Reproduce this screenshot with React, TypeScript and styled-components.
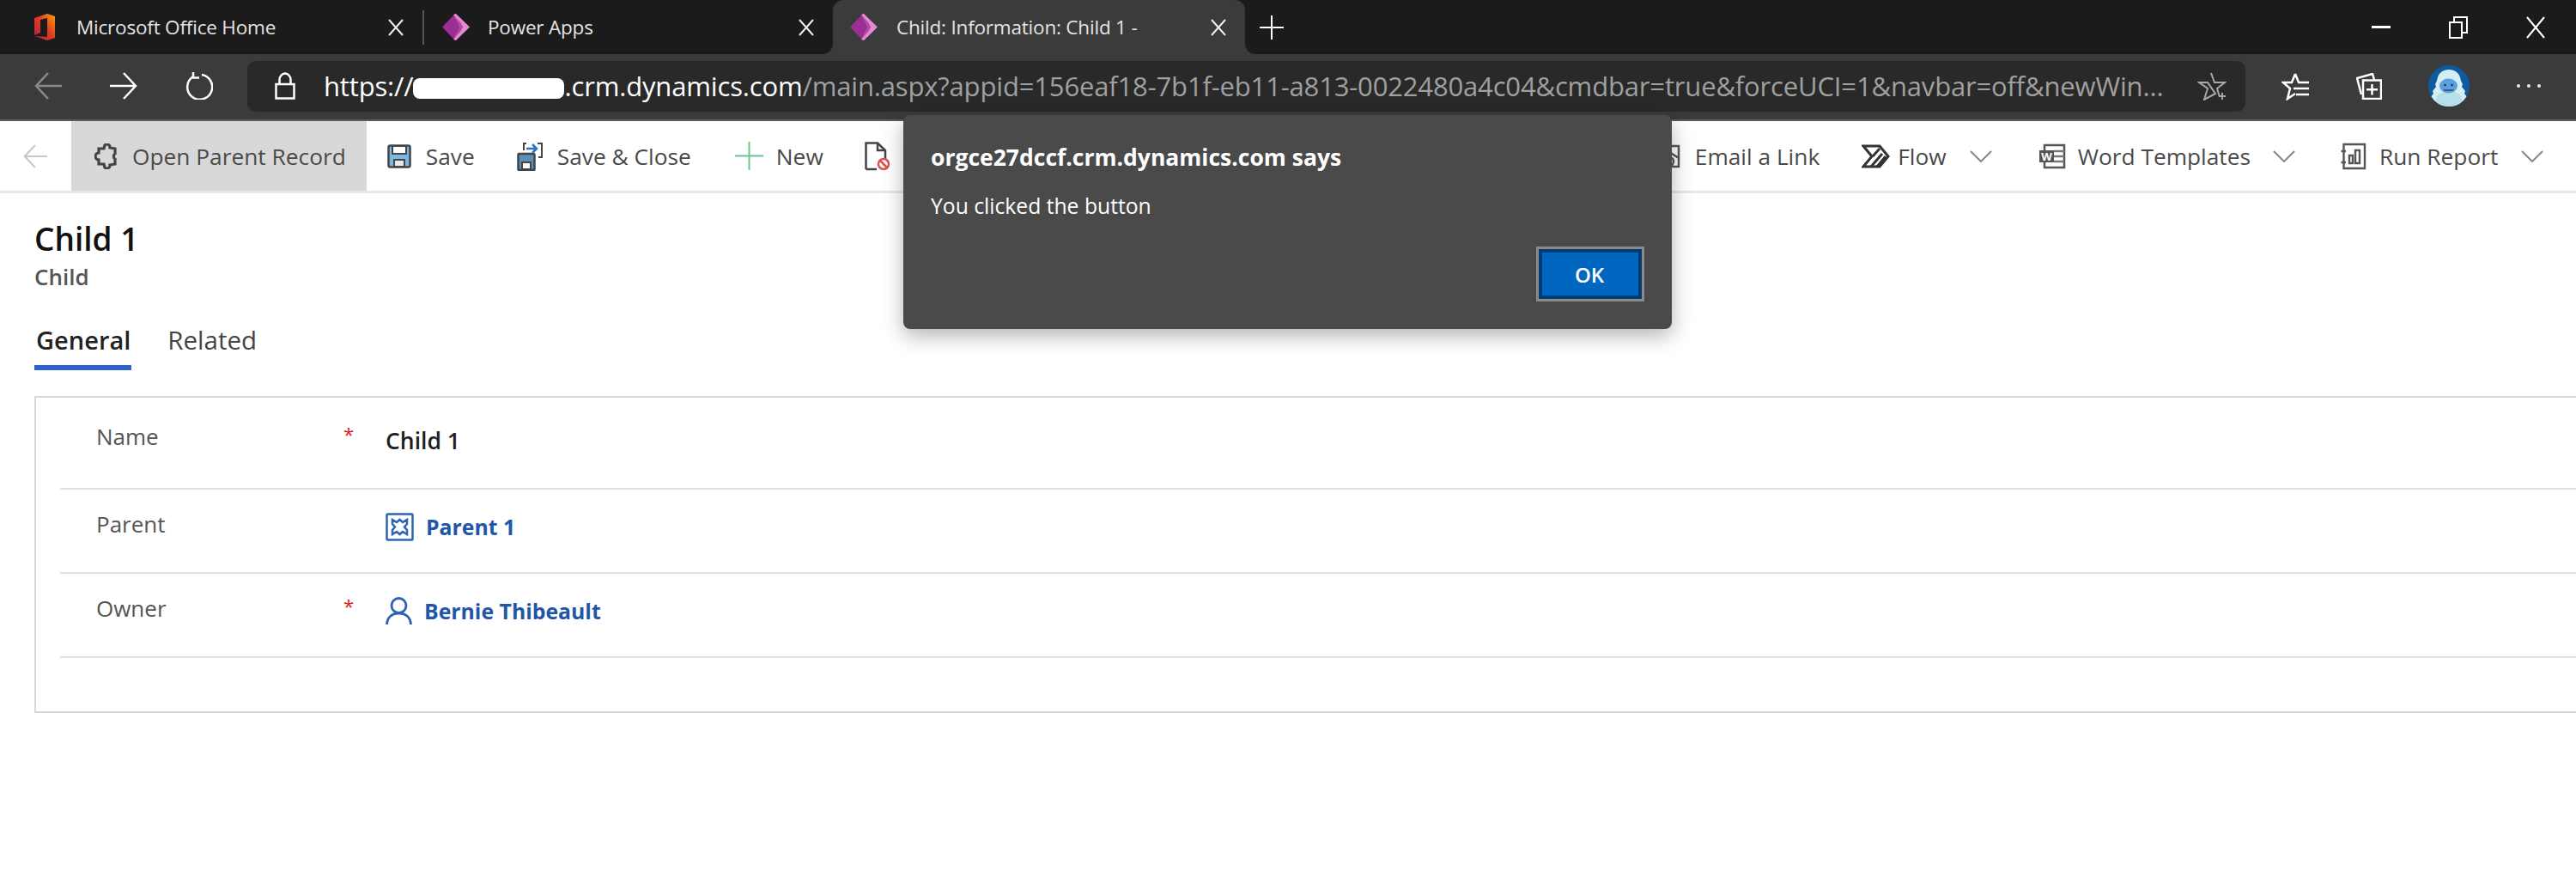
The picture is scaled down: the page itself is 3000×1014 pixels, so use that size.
import React from "react";
import styled, { createGlobalStyle } from "styled-components";

const GlobalStyle = createGlobalStyle`
  html, body {
    margin: 0;
    padding: 0;
    background: #fff;
    font-family: "Open Sans", "Noto Sans", sans-serif;
  }
  * { box-sizing: border-box; }
`;

const Page = styled.div`
  position: relative;
  width: 3000px;
  height: 1014px;
  overflow: hidden;
  background: #fff;
`;

/* browser chrome */
const TabStrip = styled.div`
  display: flex;
  height: 63px;
  background: linear-gradient(#1b1b1b 50%, #3b3b3b 50%);
`;

const TabGroup = styled.div`
  display: flex;
  width: 970px;
  background: #1b1b1b;
  border-bottom-right-radius: 12px;
`;

const Tab = styled.div<{ $active?: boolean; $width: number; $left: number }>`
  display: flex;
  align-items: center;
  width: ${(p) => p.$width}px;
  padding-left: ${(p) => p.$left}px;
  padding-right: 22px;
  background: ${(p) => (p.$active ? "#3b3b3b" : "transparent")};
  border-radius: ${(p) => (p.$active ? "12px 12px 0 0" : "0")};
  color: #e4e4e4;
  font-size: 22.5px;
  letter-spacing: -0.2px;
`;

const TabTitle = styled.span<{ $gap: number }>`
  flex: 1;
  margin-left: ${(p) => p.$gap}px;
  white-space: nowrap;
`;

const TabDivider = styled.div`
  width: 2px;
  height: 40px;
  margin-top: 12px;
  background: #555;
`;

const StripRest = styled.div`
  flex: 1;
  display: flex;
  align-items: center;
  padding-left: 17px;
  background: #1b1b1b;
  border-bottom-left-radius: 12px;
`;

const WindowControls = styled.div`
  display: flex;
  align-items: center;
  gap: 68px;
  margin-left: auto;
  margin-right: 36px;
`;

const Toolbar = styled.div`
  display: flex;
  align-items: center;
  height: 78px;
  padding: 0 40px 2px 40px;
  background: #3b3b3b;
  border-bottom: 2px solid #5c5c5c;
`;

const NavIcons = styled.div`
  display: flex;
  align-items: center;
  gap: 56px;
  margin-right: 40px;
`;

const AddressBar = styled.div`
  display: flex;
  align-items: center;
  width: 2327px;
  height: 59px;
  padding: 0 22px 0 32px;
  border-radius: 10px;
  background: #292929;
`;

const Url = styled.div`
  flex: 1;
  margin-left: 33px;
  font-size: 31px;
  letter-spacing: -0.16px;
  color: #a0a0a0;
  white-space: nowrap;
  overflow: hidden;
`;

const UrlHost = styled.span`
  color: #fff;
`;

const Redaction = styled.span`
  display: inline-block;
  width: 176px;
  height: 24px;
  margin: 0 0 -3px 0;
  background: #fff;
  border-radius: 8px;
`;

const ToolbarIcons = styled.div`
  display: flex;
  align-items: center;
  margin-left: 42px;
  gap: 54px;
`;

/* command bar */
const CommandBar = styled.div`
  display: flex;
  align-items: stretch;
  height: 84px;
  padding-left: 27px;
  border-bottom: 3px solid #e8e8e8;
  background: #fff;
  color: #4a4a4a;
  font-size: 26.3px;
`;

const BackSlot = styled.div`
  display: flex;
  align-items: center;
  width: 56px;
`;

const Command = styled.div<{ $active?: boolean; $gap?: number; $margin?: number }>`
  display: flex;
  align-items: center;
  gap: ${(p) => p.$gap ?? 17}px;
  margin-left: ${(p) => p.$margin ?? 0}px;
  padding: ${(p) => (p.$active ? "0 24px 0 27px" : "0")};
  background: ${(p) => (p.$active ? "#d8d8d8" : "transparent")};
  white-space: nowrap;
`;

const Chevron = styled.span<{ $left?: number }>`
  display: flex;
  margin-left: ${(p) => p.$left ?? 12}px;
`;

/* form */
const Content = styled.div`
  padding-left: 40px;
`;

const RecordTitle = styled.h1`
  margin: 31px 0 5px;
  font-size: 37px;
  line-height: 44px;
  font-weight: 600;
  color: #111;
`;

const RecordType = styled.div`
  font-size: 26px;
  line-height: 34px;
  font-weight: 600;
  color: #555;
`;

const FormTabs = styled.div`
  display: flex;
  gap: 40px;
  margin-top: 39px;
  line-height: 36px;
`;

const FormTab = styled.div<{ $active?: boolean }>`
  padding: 0 1px 11px 2px;
  border-bottom: 6px solid ${(p) => (p.$active ? "#2b64cf" : "transparent")};
  color: ${(p) => (p.$active ? "#222" : "#444")};
  font-weight: ${(p) => (p.$active ? 600 : 400)};
  font-size: ${(p) => (p.$active ? 29 : 29.5)}px;
`;

const Card = styled.section`
  height: 369px;
  margin: 30px -10px 0 0;
  padding-left: 28px;
  border: 2px solid #d8d8d8;
`;

const Row = styled.div<{ $first?: boolean }>`
  display: grid;
  grid-template-columns: 288px 49px 1fr;
  height: ${(p) => (p.$first ? 107 : 98)}px;
  padding: ${(p) => (p.$first ? 27 : 22)}px 0 0 42px;
  border-bottom: 2px solid #e2e2e2;
`;

const Label = styled.div`
  font-size: 26px;
  line-height: 36px;
  color: #555;
`;

const Required = styled.div`
  font-size: 22px;
  line-height: 26px;
  margin-top: 2px;
  color: #e0201c;
`;

const Value = styled.div<{ $first?: boolean }>`
  display: flex;
  align-items: center;
  gap: 14px;
  height: 36px;
  margin-top: ${(p) => (p.$first ? 5 : 3)}px;
  font-size: 26.5px;
  font-weight: 600;
  color: #1f1f1f;
`;

const RecordLink = styled.span`
  color: #1f56a8;
  font-size: 24.8px;
  font-weight: 700;
`;

/* alert */
const Alert = styled.div`
  position: absolute;
  left: 1052px;
  top: 134px;
  display: flex;
  flex-direction: column;
  width: 895px;
  height: 249px;
  padding: 31px 32px 32px;
  border-radius: 8px;
  background: #4a4a4a;
  box-shadow: 0 8px 24px rgba(0, 0, 0, 0.3);
  color: #fff;
`;

const AlertTitle = styled.div`
  font-size: 26.5px;
  line-height: 36px;
  font-weight: 700;
`;

const AlertMessage = styled.div`
  margin-top: 21px;
  font-size: 24.7px;
  line-height: 36px;
`;

const OkButton = styled.button`
  align-self: flex-end;
  width: 126px;
  height: 64px;
  margin-top: auto;
  padding: 0 2px 0 0;
  border: 3px solid #8a8a8a;
  outline: 4px solid #003c72;
  outline-offset: -7px;
  background: #0067c0;
  color: #fff;
  font-family: inherit;
  font-size: 24px;
  font-weight: 600;
`;

const Stroke = ({ w, h, children, color = "#fff", sw = 2.5 }: { w: number; h: number; children: React.ReactNode; color?: string; sw?: number }) => (
  <svg width={w} height={h} viewBox={`0 0 ${w} ${h}`} fill="none" stroke={color} strokeWidth={sw}>
    {children}
  </svg>
);

const OfficeLogo = () => (
  <svg width="24" height="31" viewBox="0 0 24 31">
    <defs>
      <linearGradient id="off" x1="0" y1="1" x2="1" y2="0">
        <stop offset="0" stopColor="#b5174f" />
        <stop offset="0.55" stopColor="#e2401d" />
        <stop offset="1" stopColor="#f7a216" />
      </linearGradient>
    </defs>
    <path d="M0 5 L15 0 L24 3 V28 L15 31 L0 26 L15 27 V5 L7 7 V22 L0 25 Z" fill="url(#off)" />
  </svg>
);

const PowerAppsLogo = () => (
  <svg width="32" height="31" viewBox="0 0 32 31">
    <path d="M0 15.5 L13 2 L20 15.5 L13 29 Z" fill="#9b2f94" />
    <path d="M13 2 L16 0 L24 15.5 L16 31 L13 29 L20 15.5 Z" fill="#b64aa8" />
    <path d="M13 1 L16 0 L32 15.5 L16 31 L13 30 L21 21 L24 15.5 L21 10 Z" fill="#e58ad2" />
  </svg>
);

const CloseIcon = () => (
  <Stroke w={18} h={20} color="#eee" sw={2}>
    <path d="M1 1 L17 19 M17 1 L1 19" />
  </Stroke>
);

const ArrowLeft = ({ color = "#8a8a8a", size = 32 }: { color?: string; size?: number }) => (
  <svg width={size} height={size} viewBox="0 0 32 32" fill="none" stroke={color} strokeWidth="2.5">
    <path d="M32 16 H2 M16 1 L2 16 L16 31" />
  </svg>
);

const ArrowRight = () => (
  <Stroke w={32} h={32}>
    <path d="M0 16 H30 M16 1 L30 16 L16 31" />
  </Stroke>
);

const Refresh = () => (
  <Stroke w={32} h={32}>
    <path d="M9 5 A14.5 14.5 0 1 0 19 3" />
    <path d="M9 0 V6.5 H16" />
  </Stroke>
);

const Lock = () => (
  <Stroke w={24} h={32}>
    <path d="M1.5 14 H22.5 V30.5 H1.5 Z M5.5 14 V9 A6.5 7.5 0 0 1 18.5 9 V14" />
  </Stroke>
);

const StarAdd = () => (
  <Stroke w={34} h={34} color="#a8a8a8" sw={2}>
    <path d="M16 2 L20 13 H32 L23 20 L26 30 M21 26 L8 33 L12 20 L2 13 H12 Z" />
    <path d="M29 25 V33 M25 29 H33" />
  </Stroke>
);

const Favorites = () => (
  <Stroke w={33} h={33}>
    <path d="M16 2 L20 12 H24 M14 19 H32 M17 26 H32 M21 12 H32 M16 2 L12 12 H2 L10 19 L7 31 L16 25" />
  </Stroke>
);

const Collections = () => (
  <Stroke w={30} h={31}>
    <path d="M6 25 L1 6 L19 1 L21 8" />
    <path d="M8 8.5 H29 V30 H8 Z M18.5 13 V25.5 M12 19.2 H25" />
  </Stroke>
);

const Avatar = () => (
  <svg width="48" height="48" viewBox="0 0 48 48" style={{ display: "block" }}>
    <defs>
      <clipPath id="av"><circle cx="24" cy="24" r="24" /></clipPath>
    </defs>
    <g clipPath="url(#av)">
      <rect width="48" height="48" fill="#0e5a9e" />
      <path d="M24 5 C16 5 11 10 10 18 L8 22 L9 25 L5 30 L6 33 L2 38 V48 H46 V38 L42 33 L43 30 L39 25 L40 22 L38 18 C37 10 32 5 24 5 Z" fill="#d4eef4" />
      <ellipse cx="24" cy="40" rx="15" ry="10" fill="#b5e0e8" />
      <ellipse cx="23.5" cy="24" rx="10.5" ry="8.5" fill="#5b9fe0" />
      <circle cx="19.5" cy="23" r="1.2" fill="#123" />
      <circle cx="27.5" cy="23" r="1.2" fill="#123" />
      <path d="M18 29 H29" stroke="#123" strokeWidth="1.2" />
    </g>
  </svg>
);

const MoreDots = () => (
  <svg width="30" height="6" viewBox="0 0 30 6" fill="#e8e8e8">
    <circle cx="3" cy="3" r="2" />
    <circle cx="15" cy="3" r="2" />
    <circle cx="27" cy="3" r="2" />
  </svg>
);

const Plus = ({ color = "#fff", size = 28, sw = 2 }: { color?: string; size?: number; sw?: number }) => (
  <svg width={size} height={size} viewBox={`0 0 ${size} ${size}`} stroke={color} strokeWidth={sw} fill="none">
    <path d={`M${size / 2} 0 V${size} M0 ${size / 2} H${size}`} />
  </svg>
);

const Puzzle = () => (
  <Stroke w={27} h={30} color="#444" sw={3.2}>
    <path d="M12 2 A3.5 3.5 0 0 1 18 5 L24 6 V12 A3.5 3.5 0 0 0 24 18 V24 L18 25 A3.5 3.5 0 0 1 12 28 L11 24 H5 V19 A4 4 0 0 1 5 11 V6 H11 Z" />
  </Stroke>
);

const SaveIcon = () => (
  <svg width="28" height="28" viewBox="0 0 28 28">
    <rect x="1.5" y="1.5" width="25" height="25" rx="2" fill="#7db7e3" stroke="#444" strokeWidth="2.5" />
    <rect x="6" y="2" width="16" height="9" fill="#fff" stroke="#444" strokeWidth="2" />
    <rect x="8" y="18" width="12" height="8" fill="#e8e8e8" stroke="#444" strokeWidth="2" />
  </svg>
);

const SaveCloseIcon = () => (
  <svg width="30" height="35" viewBox="0 0 30 35" fill="none">
    <rect x="1.5" y="15" width="19" height="19" rx="1" fill="#5b91b8" stroke="#444" strokeWidth="2.5" />
    <rect x="6" y="25" width="10" height="8" fill="#fff" stroke="#444" strokeWidth="2" />
    <path d="M8 11 V3 H11 M24 3 H29 V19 H25" stroke="#444" strokeWidth="2" />
    <path d="M11 9 H23 M18 4 L23 9 L18 14" stroke="#2a74c4" strokeWidth="2.5" />
  </svg>
);

const DocBlocked = () => (
  <svg width="30" height="34" viewBox="0 0 30 34" fill="none">
    <path d="M1.5 32 V1.5 H15 L24 10 V20 M15 1.5 V10 H24 M1.5 32 H14" stroke="#444" strokeWidth="2.5" />
    <circle cx="22" cy="26" r="6" fill="#fff" stroke="#d9534f" strokeWidth="2.5" />
    <path d="M18 22 L26 30" stroke="#d9534f" strokeWidth="2.5" />
  </svg>
);

const MailLink = () => (
  <Stroke w={26} h={32} color="#555" sw={2.5}>
    <path d="M2 4 H24 V28 H2 Z M2 4 L24 18" />
    <circle cx="13" cy="22" r="5" />
  </Stroke>
);

const FlowIcon = () => (
  <Stroke w={33} h={28} color="#333" sw={3}>
    <path d="M2 2 H21 L31 14 L21 26 H2 L12 14 Z" />
    <path d="M11 26 L24 11 M18 26 L28 14 M13 14 L21 5" />
  </Stroke>
);

const WordIcon = () => (
  <svg width="32" height="30" viewBox="0 0 32 30" fill="none">
    <path d="M7 8 V2 H30 V28 H7 V22" stroke="#555" strokeWidth="2.5" />
    <path d="M18 9 H30 M18 15 H30 M18 21 H30" stroke="#777" strokeWidth="2.5" />
    <rect x="1" y="8" width="17" height="14" fill="#555" />
    <text x="9.5" y="19.5" textAnchor="middle" fontSize="13" fontWeight="700" fill="#fff">W</text>
  </svg>
);

const ReportIcon = () => (
  <Stroke w={30} h={32} color="#555" sw={2.4}>
    <path d="M3.5 2 H28 V30 H3.5 Z M0.5 10 H6 M0.5 23 H6" />
    <path d="M10 15 H14 V24 H10 Z M17 9 H22 V24 H17 Z" />
  </Stroke>
);

const ChevronDown = () => (
  <Stroke w={26} h={14} color="#888" sw={2}>
    <path d="M1 1 L13 13 L25 1" />
  </Stroke>
);

const EntityIcon = () => (
  <svg width="33" height="33" viewBox="0 0 33 33" fill="none" stroke="#2b63b5" strokeWidth="2.5">
    <rect x="1.5" y="1.5" width="30" height="30" rx="1" />
    <path d="M8 8 L13 11 L16.5 8 L20 11 L25 8 V13 L22 16.5 L25 20 V25 L20 22 L16.5 25 L13 22 L8 25 V20 L11 16.5 L8 13 Z" />
  </svg>
);

const PersonIcon = () => (
  <svg width="31" height="33" viewBox="0 0 31 33" fill="none" stroke="#2b63b5" strokeWidth="2.8">
    <circle cx="15.5" cy="10" r="8.5" />
    <path d="M1.5 32 C2 24 7 19 15.5 19 C24 19 29 24 29.5 32" />
  </svg>
);

const App = () => (
  <Page>
    <GlobalStyle />
    <TabStrip>
      <TabGroup>
        <Tab $width={492} $left={40}>
          <OfficeLogo />
          <TabTitle $gap={25}>Microsoft Office Home</TabTitle>
          <CloseIcon />
        </Tab>
        <TabDivider />
        <Tab $width={476} $left={21}>
          <PowerAppsLogo />
          <TabTitle $gap={21}>Power Apps</TabTitle>
          <CloseIcon />
        </Tab>
      </TabGroup>
      <Tab $active $width={480} $left={20}>
        <PowerAppsLogo />
        <TabTitle $gap={22}>Child: Information: Child 1 -</TabTitle>
        <CloseIcon />
      </Tab>
      <StripRest>
        <Plus />
        <WindowControls>
          <svg width="22" height="3" viewBox="0 0 22 3"><rect width="22" height="3" fill="#fff" /></svg>
          <Stroke w={22} h={26} sw={2}>
            <path d="M1 7 H15 V25 H1 Z M6 7 V1 H21 V19 H15" />
          </Stroke>
          <Stroke w={22} h={26} sw={2}>
            <path d="M1 1 L21 25 M21 1 L1 25" />
          </Stroke>
        </WindowControls>
      </StripRest>
    </TabStrip>

    <Toolbar>
      <NavIcons>
        <ArrowLeft />
        <ArrowRight />
        <Refresh />
      </NavIcons>
      <AddressBar>
        <Lock />
        <Url>
          <UrlHost>https://<Redaction />.crm.dynamics.com</UrlHost>/main.aspx?appid=156eaf18-7b1f-eb11-a813-0022480a4c04&cmdbar=true&forceUCI=1&navbar=off&newWin...
        </Url>
        <StarAdd />
      </AddressBar>
      <ToolbarIcons>
        <Favorites />
        <Collections />
        <Avatar />
        <MoreDots />
      </ToolbarIcons>
    </Toolbar>

    <CommandBar>
      <BackSlot><ArrowLeft color="#c8c8c8" size={28} /></BackSlot>
      <Command $active><Puzzle />Open Parent Record</Command>
      <Command $margin={24}><SaveIcon />Save</Command>
      <Command $margin={49}><SaveCloseIcon />Save &amp; Close</Command>
      <Command $margin={51} $gap={15}><Plus color="#6cc38a" size={33} />New</Command>
      <Command $margin={48}><DocBlocked /></Command>
      <Command $margin={894}><MailLink />Email a Link</Command>
      <Command $margin={49} $gap={9}>
        <FlowIcon />Flow<Chevron $left={18}><ChevronDown /></Chevron>
      </Command>
      <Command $margin={54} $gap={14}>
        <WordIcon />Word Templates<Chevron><ChevronDown /></Chevron>
      </Command>
      <Command $margin={53} $gap={15}>
        <ReportIcon />Run Report<Chevron><ChevronDown /></Chevron>
      </Command>
    </CommandBar>

    <Content>
      <RecordTitle>Child 1</RecordTitle>
      <RecordType>Child</RecordType>
      <FormTabs>
        <FormTab $active>General</FormTab>
        <FormTab>Related</FormTab>
      </FormTabs>
      <Card>
        <Row $first>
          <Label>Name</Label>
          <Required>*</Required>
          <Value $first>Child 1</Value>
        </Row>
        <Row>
          <Label>Parent</Label>
          <div />
          <Value><EntityIcon /><RecordLink>Parent 1</RecordLink></Value>
        </Row>
        <Row>
          <Label>Owner</Label>
          <Required>*</Required>
          <Value><PersonIcon /><RecordLink>Bernie Thibeault</RecordLink></Value>
        </Row>
      </Card>
    </Content>

    <Alert>
      <AlertTitle>orgce27dccf.crm.dynamics.com says</AlertTitle>
      <AlertMessage>You clicked the button</AlertMessage>
      <OkButton>OK</OkButton>
    </Alert>
  </Page>
);

export default App;
